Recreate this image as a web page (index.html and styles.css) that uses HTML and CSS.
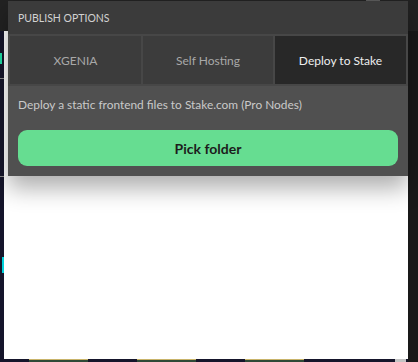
FILE: index.html
```html
<!DOCTYPE html>
<html>
<head>
<meta charset="utf-8">
<link rel="stylesheet" href="styles.css">
</head>
<body>
<div class="app">
  <div class="topbar"><span class="topbar-knob"></span></div>
  <div class="leftrail">
    <span class="rail-glyph"></span>
    <span class="rail-line rail-line-a"></span>
    <span class="rail-line rail-line-b"></span>
    <span class="rail-accent"></span>
  </div>
  <div class="canvas"></div>
  <div class="rightrail"></div>
  <div class="bottomstrip">
    <span class="chip"></span>
    <span class="chip"></span>
    <span class="chip"></span>
    <span class="scrollthumb"></span>
  </div>
</div>

<div class="dialog">
  <div class="dialog-header">PUBLISH OPTIONS</div>
  <div class="tabs">
    <div class="tab">XGENIA</div>
    <div class="tab">Self Hosting</div>
    <div class="tab tab-active">Deploy to Stake</div>
  </div>
  <div class="dialog-body">
    <p class="desc">Deploy a static frontend files to Stake.com (Pro Nodes)</p>
    <button class="pick">Pick folder</button>
  </div>
</div>
</body>
</html>
```

FILE: styles.css
```css
html, body {
  margin: 0;
  padding: 0;
  width: 418px;
  height: 362px;
  overflow: hidden;
  background: #1a1a1a;
  font-family: Lato, "Noto Sans", sans-serif;
}

.app {
  display: grid;
  grid-template-columns: 4px 404px 10px;
  grid-template-rows: 31px 328px 3px;
  width: 418px;
  height: 362px;
}

.topbar {
  grid-column: 1 / 4;
  grid-row: 1;
  background: #222222;
  position: relative;
}
.topbar-knob {
  position: absolute;
  left: 366px;
  top: 0;
  width: 14px;
  height: 2px;
  background: #5a5a5a;
}

.leftrail {
  grid-column: 1;
  grid-row: 2;
  background: #15152b;
  position: relative;
}
.rail-glyph {
  position: absolute;
  left: 0;
  top: 22px;
  width: 2px;
  height: 11px;
  background: #1fe0a8;
}
.rail-line {
  position: absolute;
  left: 0;
  width: 4px;
  height: 1px;
  background: #8a8a8a;
}
.rail-line-a { top: 47px; }
.rail-line-b { top: 145px; }
.rail-accent {
  position: absolute;
  left: 2px;
  top: 226px;
  width: 2px;
  height: 16px;
  background: #00d2dc;
}

.canvas {
  grid-column: 2;
  grid-row: 2;
  background: #ffffff;
}

.rightrail {
  grid-column: 3;
  grid-row: 2 / 4;
  background: #191919;
}

.bottomstrip {
  grid-column: 1 / 3;
  grid-row: 3;
  background: #15152b;
  position: relative;
}
.chip {
  position: absolute;
  top: 0;
  width: 59px;
  height: 3px;
  background: #2f4a38;
  border-top: 1px solid #c9b46a;
  box-sizing: border-box;
}
.chip:nth-child(1) { left: 29px; }
.chip:nth-child(2) { left: 137px; }
.chip:nth-child(3) { left: 245px; }
.scrollthumb {
  position: absolute;
  left: 395px;
  top: 0;
  width: 11px;
  height: 3px;
  background: #c4c4c4;
}

.dialog {
  position: absolute;
  left: 8px;
  top: 1px;
  width: 400px;
  display: flex;
  flex-direction: column;
  background: #505050;
  box-shadow: 0 12px 22px rgba(0, 0, 0, 0.32);
}

.dialog-header {
  height: 33px;
  display: flex;
  align-items: center;
  padding-left: 10px;
  background: #3b3b3b;
  color: #d2d2d2;
  font-size: 10.5px;
}

.tabs {
  display: grid;
  grid-template-columns: 131px 130px 131px;
  gap: 2px;
  padding: 2px;
  background: #474747;
}
.tab {
  height: 48px;
  display: flex;
  align-items: center;
  justify-content: center;
  background: #3c3c3c;
  color: #a8a8a8;
  font-size: 12px;
}
.tab-active {
  background: #282828;
  color: #eeeeee;
}

.dialog-body {
  display: flex;
  flex-direction: column;
  padding: 11px 10px 10px;
  gap: 17px;
}
.desc {
  margin: 0;
  height: 16px;
  line-height: 16px;
  color: #c9c9c9;
  font-size: 11.9px;
}
.pick {
  height: 36px;
  border: none;
  border-radius: 9px;
  background: #66dd91;
  color: #1c1c1c;
  font-family: Lato, "Noto Sans", sans-serif;
  font-size: 14px;
  font-weight: 700;
  padding: 0;
}
```
